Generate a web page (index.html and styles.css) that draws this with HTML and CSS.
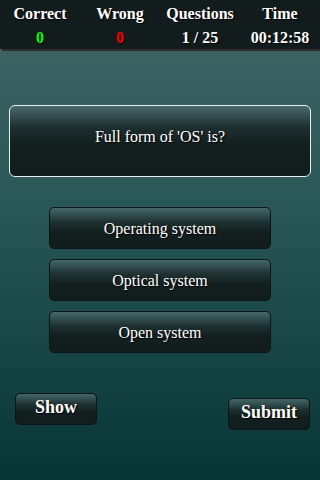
FILE: index.html
```html
<!DOCTYPE html>
<html>
<head>
<meta charset="utf-8">
<link rel="stylesheet" href="styles.css">
</head>
<body>
<div class="page">
  <div class="header">
    <div class="stat"><div class="label">Correct</div><div class="value green">0</div></div>
    <div class="stat"><div class="label">Wrong</div><div class="value red">0</div></div>
    <div class="stat"><div class="label">Questions</div><div class="value">1 / 25</div></div>
    <div class="stat"><div class="label">Time</div><div class="value">00:12:58</div></div>
  </div>
  <div class="question">Full form of 'OS' is?</div>
  <div class="options">
    <div class="option">Operating system</div>
    <div class="option">Optical system</div>
    <div class="option">Open system</div>
  </div>
  <div class="actions">
    <div class="btn show">Show</div>
    <div class="btn submit">Submit</div>
  </div>
</div>
</body>
</html>
```
FILE: styles.css
```css
html, body {
  margin: 0;
  padding: 0;
}
body {
  font-family: "Liberation Serif", "Times New Roman", serif;
  color: #fff;
}
.page {
  width: 320px;
  height: 480px;
  background: linear-gradient(to bottom, #426565 0%, #2b5858 40%, #073434 100%);
  overflow: hidden;
  display: flex;
  flex-direction: column;
}
.header {
  height: 49px;
  background: #131c1c;
  box-shadow: 2px 2px 0 #2c2c2c;
  display: grid;
  grid-template-columns: repeat(4, 1fr);
  flex: none;
}
.stat {
  text-align: center;
  font-weight: bold;
  font-size: 16px;
  text-shadow: 1px 1px 1px #000;
}
.label {
  margin-top: 4px;
  line-height: 20px;
}
.value {
  line-height: 20px;
  margin-top: 4px;
}
.green { color: #00ff00; }
.red { color: #ff0000; }
.question {
  margin: 56px 9px 0 9px;
  height: 62px;
  padding-bottom: 8px;
  border: 1px solid #e8f0f0;
  border-radius: 6px;
  background: linear-gradient(to bottom, #4a6a6a 0%, #1e2f2f 30%, #131f1f 55%, #111c1c 100%);
  display: flex;
  align-items: center;
  justify-content: center;
  font-size: 16px;
  text-shadow: 1px 1px 1px #000;
}
.options {
  margin-top: 30px;
  display: flex;
  flex-direction: column;
  align-items: center;
  gap: 10px;
}
.option {
  width: 220px;
  height: 39px;
  padding-top: 1px;
  border: 1px solid #0c1616;
  border-radius: 5px;
  background: linear-gradient(to bottom, #456767 0%, #1f3131 35%, #131f1f 60%, #111c1c 100%);
  display: flex;
  align-items: center;
  justify-content: center;
  font-size: 16px;
  text-shadow: 1px 1px 1px #000;
}
.actions {
  margin-top: 40px;
  display: flex;
  justify-content: space-between;
  align-items: flex-start;
  padding: 0 10px 0 15px;
}
.btn {
  width: 80px;
  height: 27px;
  padding-bottom: 3px;
  border: 1px solid #0c1616;
  border-radius: 5px;
  background: linear-gradient(to bottom, #456767 0%, #1f3131 35%, #131f1f 60%, #111c1c 100%);
  display: flex;
  align-items: center;
  justify-content: center;
  font-size: 18px;
  font-weight: bold;
  text-shadow: 1px 1px 1px #000;
}
.submit {
  margin-top: 5px;
}
```
